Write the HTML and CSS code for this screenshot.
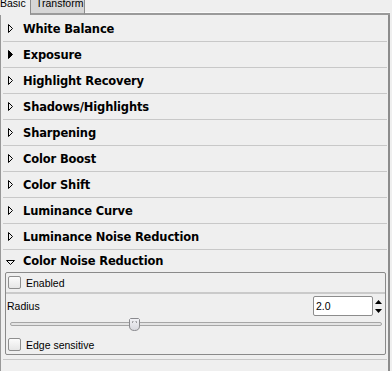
FILE: index.html
```html
<!DOCTYPE html>
<html lang="en">
<head>
  <meta charset="UTF-8" />
  <meta name="viewport" content="width=device-width, initial-scale=1.0" />
  <title>Image Tools</title>
  <link rel="stylesheet" href="styles.css">
</head>
<body>
  <div class="tabs">
    <div class="tab active">Basic</div>
    <div class="tab">Transform</div>
    <div class="tabFill"></div>
  </div>

  <div class="panel">
    <!-- collapsed tool sections -->
    <div class="section">
      <div class="sectionHead"><svg class="expander" viewBox="0 0 9 9"><polygon points="2.5,0.5 6.5,4.5 2.5,8.5"/></svg>White Balance</div>
    </div>
    <div class="section">
      <div class="sectionHead hover"><svg class="expander" viewBox="0 0 9 9"><polygon points="2.5,0.5 6.5,4.5 2.5,8.5"/></svg>Exposure</div>
    </div>
    <div class="section">
      <div class="sectionHead"><svg class="expander" viewBox="0 0 9 9"><polygon points="2.5,0.5 6.5,4.5 2.5,8.5"/></svg>Highlight Recovery</div>
    </div>
    <div class="section">
      <div class="sectionHead"><svg class="expander" viewBox="0 0 9 9"><polygon points="2.5,0.5 6.5,4.5 2.5,8.5"/></svg>Shadows/Highlights</div>
    </div>
    <div class="section">
      <div class="sectionHead"><svg class="expander" viewBox="0 0 9 9"><polygon points="2.5,0.5 6.5,4.5 2.5,8.5"/></svg>Sharpening</div>
    </div>
    <div class="section">
      <div class="sectionHead"><svg class="expander" viewBox="0 0 9 9"><polygon points="2.5,0.5 6.5,4.5 2.5,8.5"/></svg>Color Boost</div>
    </div>
    <div class="section">
      <div class="sectionHead"><svg class="expander" viewBox="0 0 9 9"><polygon points="2.5,0.5 6.5,4.5 2.5,8.5"/></svg>Color Shift</div>
    </div>
    <div class="section">
      <div class="sectionHead"><svg class="expander" viewBox="0 0 9 9"><polygon points="2.5,0.5 6.5,4.5 2.5,8.5"/></svg>Luminance Curve</div>
    </div>
    <div class="section">
      <div class="sectionHead"><svg class="expander" viewBox="0 0 9 9"><polygon points="2.5,0.5 6.5,4.5 2.5,8.5"/></svg>Luminance Noise Reduction</div>
    </div>

    <!-- expanded section -->
    <div class="section open">
      <div class="sectionHead"><svg class="expander" viewBox="0 0 9 9"><polygon points="0.5,3.5 8.5,3.5 4.5,7.5"/></svg>Color Noise Reduction</div>
      <div class="group">
        <div class="checkRow"><span class="check"></span>Enabled</div>
        <div class="groupSep"></div>
        <div class="spinRow">
          <span class="label">Radius</span>
          <div class="spin">
            <div class="entry">2.0</div>
            <div class="arrows">
              <svg viewBox="0 0 7 4" width="7" height="4"><polygon points="0,4 7,4 3.5,0"/></svg>
              <svg viewBox="0 0 7 4" width="7" height="4"><polygon points="0,0 7,0 3.5,4"/></svg>
            </div>
          </div>
        </div>
        <div class="slider">
          <div class="track"></div>
          <svg class="thumb" viewBox="0 0 11 13" width="11" height="13">
            <defs>
              <linearGradient id="thumbFill" x1="0" y1="0" x2="0" y2="1">
                <stop offset="0" stop-color="#f2f2f6"/>
                <stop offset="1" stop-color="#d8d8de"/>
              </linearGradient>
            </defs>
            <path d="M1.5,0.5 H9.5 L10.5,1.5 V8 Q10.5,12.5 5.5,12.5 Q0.5,12.5 0.5,8 V1.5 Z" fill="url(#thumbFill)" stroke="#8a8a8e"/>
            <path d="M3.5,5 V3.5 H4.5 M7.5,5 V3.5 H6.5" fill="none" stroke="#9a9a9e"/>
          </svg>
        </div>
        <div class="checkRow last"><span class="check"></span>Edge sensitive</div>
      </div>
    </div>
  </div>
</body>
</html>
```

FILE: styles.css
```css
/* Base */
* { box-sizing: border-box; margin: 0; padding: 0; }
body {
  font-family: "Liberation Sans", Arial, sans-serif;
  font-size: 10.5px;
  color: #000;
  background: #efefef;
  height: 371px;
  overflow: hidden;
}

/* Notebook tabs */
.tabs {
  display: flex;
  width: 390px;
  height: 15px;
}
.tab {
  height: 15px;
  line-height: 7px;
  white-space: nowrap;
}
.tab.active {
  width: 30px;
  background: #efefef;
}
.tab:not(.active) {
  width: 55px;
  padding-left: 5px;
  background: #d6d6d6;
  border-left: 1px solid #8c8c8c;
  border-right: 1px solid #8c8c8c;
  border-bottom: 2px solid #9a9a9a;
}
.tabFill {
  flex: 1;
  border-bottom: 2px solid #9a9a9a;
  box-shadow: inset 0 -1px 0 #fafafa;
}

/* Tool panel */
.panel {
  width: 390px;
  height: 356px;
  padding-top: 1px;
  border-left: 1px solid #989898;
  border-right: 2px solid #8c8c8c;
}
.section {
  margin: 0 1px 0 2px;
  border-bottom: 1px solid #c8c8c8;
}
.sectionHead {
  display: flex;
  align-items: center;
  gap: 8px;
  height: 25px;
  padding-left: 3px;
  font-family: "DejaVu Sans", Verdana, sans-serif;
  font-weight: bold;
  font-size: 11.5px;
  letter-spacing: -0.15px;
}
.expander {
  width: 9px;
  height: 9px;
  fill: none;
  stroke: #000;
  stroke-width: 1;
}
.sectionHead.hover .expander { fill: #000; }
.section.open { padding-bottom: 4px; }
.section.open .sectionHead { height: 22px; }

/* Framed group inside an open section */
.group {
  margin: 0 1px 0 2px;
  border: 1px solid #8a8a8a;
  border-radius: 2px;
}
.checkRow {
  display: flex;
  align-items: center;
  gap: 5px;
  height: 19px;
  padding-left: 2px;
}
.checkRow.last { margin-top: 3px; }
.check {
  width: 13px;
  height: 13px;
  border: 1px solid #8e8e8e;
  border-radius: 2px;
  background: linear-gradient(#fbfbfb, #e6e6e6);
}
.groupSep {
  height: 2px;
  background: #cacaca;
}
.spinRow {
  display: flex;
  align-items: center;
  justify-content: space-between;
  padding: 2px 2px 0 1px;
}
.spin {
  display: flex;
  align-items: center;
  gap: 2px;
}
.entry {
  width: 60px;
  height: 20px;
  line-height: 18px;
  padding-left: 2px;
  background: #fff;
  border: 1px solid #8c8c8c;
  border-radius: 2px;
}
.arrows {
  display: flex;
  flex-direction: column;
  gap: 5px;
  width: 8px;
}
.arrows svg { fill: #000; }

/* Slider */
.slider {
  position: relative;
  height: 16px;
  margin: 0 3px 0 4px;
  padding-top: 6px;
}
.track {
  height: 4px;
  border: 1px solid #a6a6a6;
  border-radius: 2px;
  background: #e4e4e4;
}
.thumb {
  position: absolute;
  left: 119px;
  top: 2px;
}
```
